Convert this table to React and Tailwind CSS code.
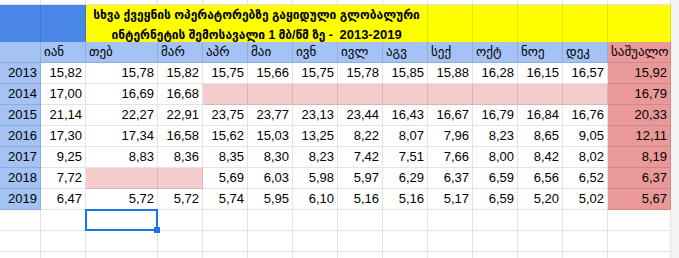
import React from 'react';

const months = ['იან', 'თებ', 'მარ', 'აპრ', 'მაი', 'ივნ', 'ივლ', 'აგვ', 'სექ', 'ოქტ', 'ნოე', 'დეკ'];

// null = empty pink cell
const rows = [
  ['2013', ['15,82', '15,78', '15,82', '15,75', '15,66', '15,75', '15,78', '15,85', '15,88', '16,28', '16,15', '16,57'], '15,92'],
  ['2014', ['17,00', '16,69', '16,68', null, null, null, null, null, null, null, null, null], '16,79'],
  ['2015', ['21,14', '22,27', '22,91', '23,75', '23,77', '23,13', '23,44', '16,43', '16,67', '16,79', '16,84', '16,76'], '20,33'],
  ['2016', ['17,30', '17,34', '16,58', '15,62', '15,03', '13,25', '8,22', '8,07', '7,96', '8,23', '8,65', '9,05'], '12,11'],
  ['2017', ['9,25', '8,83', '8,36', '8,35', '8,30', '8,23', '7,42', '7,51', '7,66', '8,00', '8,42', '8,02'], '8,19'],
  ['2018', ['7,72', null, null, '5,69', '6,03', '5,98', '5,97', '6,29', '6,37', '6,59', '6,56', '6,52'], '6,37'],
  ['2019', ['6,47', '5,72', '5,72', '5,74', '5,95', '6,10', '5,16', '5,16', '5,17', '6,59', '5,20', '5,02'], '5,67'],
];

const grid = 'grid grid-cols-[41px_45px_72px_repeat(10,45px)_63px_1fr]';
const cell = 'border-r border-b border-black/[0.11] px-[3px] leading-[20px] whitespace-nowrap overflow-visible';

const Strip = () => <div className="bg-[#f3f3f3]" />;

const BlankRow = ({ h }) => (
  <div className={`${grid} ${h}`}>
    {Array.from({ length: 14 }).map((_, i) => <div key={i} className={`${cell} bg-white`} />)}
    <Strip />
  </div>
);

export default function App() {
  return (
    <div className="relative w-[679px] h-[258px] overflow-hidden bg-white text-black text-[13px] font-['Liberation_Sans','DejaVu_Sans',sans-serif]">
      <BlankRow h="h-[5px]" />

      {/* title row */}
      <div className={`${grid} h-[37px]`}>
        <div className={`${cell} bg-[#4a86e8]`} />
        <div className={`${cell} bg-[#4a86e8]`} />
        <div className={`${cell} col-span-7 bg-[#ffff00] font-bold text-[12px] leading-[16px] flex flex-col items-center justify-center text-center`}>
          <span>სხვა ქვეყნის ოპერატორებზე გაყიდული გლობალური</span>
          <span>ინტერნეტის შემოსავალი 1 მბ/წმ ზე -&nbsp; <span className="text-[13px]">2013-2019</span></span>
        </div>
        {Array.from({ length: 5 }).map((_, i) => (
          <div key={i} className={`${cell} bg-[#ffff00]`} />
        ))}
        <Strip />
      </div>

      {/* months header */}
      <div className={`${grid} h-[21px]`}>
        <div className={`${cell} bg-[#a4c2f4]`} />
        {months.map((m) => (
          <div key={m} className={`${cell} bg-[#a4c2f4]`}>{m}</div>
        ))}
        <div className={`${cell} bg-[#ea9999]`}>საშუალო</div>
        <Strip />
      </div>

      {rows.map(([year, vals, avg]) => (
        <div key={year} className={`${grid} h-[21px]`}>
          <div className={`${cell} bg-[#a4c2f4] text-right`}>{year}</div>
          {vals.map((v, i) =>
            v === null ? (
              <div key={i} className={`${cell} bg-[#f4cccc]`} />
            ) : (
              <div key={i} className={`${cell} bg-white text-right`}>{v}</div>
            )
          )}
          <div className={`${cell} bg-[#ea9999] text-right`}>{avg}</div>
          <Strip />
        </div>
      ))}

      {/* empty row with the selected cell */}
      <div className={`${grid} h-[21px]`}>
        <div className={`${cell} bg-white`} />
        <div className={`${cell} bg-white`} />
        <div className={`${cell} bg-white relative z-10`}>
          <div className="absolute left-[-1px] top-[-1px] w-[73px] h-[22px] border-2 border-[#1a73e8]" />
          <div className="absolute left-[68px] top-[17px] w-[6px] h-[6px] bg-[#1a73e8] z-20" />
        </div>
        {Array.from({ length: 11 }).map((_, i) => (
          <div key={i} className={`${cell} bg-white`} />
        ))}
        <Strip />
      </div>

      <BlankRow h="h-[21px]" />
      <BlankRow h="h-[21px]" />
    </div>
  );
}
